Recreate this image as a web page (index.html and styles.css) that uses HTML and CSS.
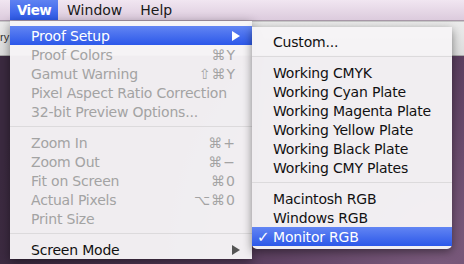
FILE: index.html
```html
<!DOCTYPE html>
<html lang="en">
<head>
    <meta charset="UTF-8">
    <title>View menu</title>
    <link rel="stylesheet" href="styles.css">
</head>
<body>
    <div class="menubar">
        <span class="menubar-item open">View</span>
        <span class="menubar-item">Window</span>
        <span class="menubar-item">Help</span>
    </div>

    <div class="desktop">
        <div class="window-toolbar">
            <span class="tab-label">ry</span>
        </div>

        <!-- main View menu -->
        <ul class="menu main-menu">
            <li class="item selected has-sub">
                <span class="label">Proof Setup</span>
                <span class="arrow"></span>

                <!-- Proof Setup submenu -->
                <ul class="menu sub-menu">
                    <li class="item"><span class="label">Custom...</span></li>
                    <li class="sep"></li>
                    <li class="item"><span class="label">Working CMYK</span></li>
                    <li class="item"><span class="label">Working Cyan Plate</span></li>
                    <li class="item"><span class="label">Working Magenta Plate</span></li>
                    <li class="item"><span class="label">Working Yellow Plate</span></li>
                    <li class="item"><span class="label">Working Black Plate</span></li>
                    <li class="item"><span class="label">Working CMY Plates</span></li>
                    <li class="sep"></li>
                    <li class="item"><span class="label">Macintosh RGB</span></li>
                    <li class="item"><span class="label">Windows RGB</span></li>
                    <li class="item selected"><span class="check">✓</span><span class="label">Monitor RGB</span></li>
                </ul>
            </li>
            <li class="item disabled"><span class="label">Proof Colors</span><span class="key">⌘Y</span></li>
            <li class="item disabled"><span class="label">Gamut Warning</span><span class="key">⇧⌘Y</span></li>
            <li class="item disabled"><span class="label">Pixel Aspect Ratio Correction</span></li>
            <li class="item disabled"><span class="label">32-bit Preview Options...</span></li>
            <li class="sep"></li>
            <li class="item disabled"><span class="label">Zoom In</span><span class="key">⌘+</span></li>
            <li class="item disabled"><span class="label">Zoom Out</span><span class="key">⌘−</span></li>
            <li class="item disabled"><span class="label">Fit on Screen</span><span class="key">⌘0</span></li>
            <li class="item disabled"><span class="label">Actual Pixels</span><span class="key">⌥⌘0</span></li>
            <li class="item disabled"><span class="label">Print Size</span></li>
            <li class="sep"></li>
            <li class="item has-sub"><span class="label">Screen Mode</span><span class="arrow"></span></li>
        </ul>
    </div>
</body>
</html>
```

FILE: styles.css
```css
/* page */
body { margin: 0; width: 464px; height: 264px; overflow: hidden; font-family: "DejaVu Sans", "Liberation Sans", sans-serif; color: #111; }

/* menu bar */
.menubar { height: 21px; display: flex; padding-left: 10px; background: linear-gradient(#f1e6f1, #dccbdd); border-bottom: 1px solid #a898a8; box-sizing: border-box; }
.menubar-item { padding: 0 9px; font-size: 14px; line-height: 21px; color: #1a1a1a; }
.menubar-item.open { padding: 0 7px; background: linear-gradient(#5f82f2, #2d59e8); color: #fff; font-weight: bold; font-size: 13.5px; letter-spacing: -0.6px; }

/* desktop + window behind the menus */
.desktop { position: relative; height: 243px; background: radial-gradient(circle at 95% 95%, #7a5a7c, #5a3e5e 40%, #3b2a40 90%); }
.window-toolbar { height: 35px; background: linear-gradient(#ebebeb, #dcdcdc); border-top: 1px solid #c8c8c8; border-bottom: 1px solid #a9a9a9; box-sizing: border-box; }
.tab-label { display: inline-block; font-family: "Liberation Sans", sans-serif; font-size: 11px; line-height: 30px; color: #333; }

/* menus */
.menu { list-style: none; margin: 0; background: rgba(246, 244, 246, 0.97); font-size: 14px; letter-spacing: -0.2px; }
.main-menu { position: absolute; left: 10px; top: 0; width: 242px; padding: 5px 0 0; box-shadow: 0 3px 10px rgba(0,0,0,0.45); }
.sub-menu { position: absolute; left: 242px; top: 1px; width: 200px; padding: 5px 0 3px; border-radius: 0 0 5px 5px; box-shadow: 0 3px 10px rgba(0,0,0,0.45); z-index: 2; }

.item { position: relative; height: 19px; display: flex; align-items: center; padding: 0 16px 0 21px; white-space: nowrap; }
.item .label { flex-grow: 1; }
.item .key { color: #a3a3a3; letter-spacing: 1px; }
.item.disabled { color: #a3a3a3; }
.item.selected { background: linear-gradient(#6285f3, #2c58e9); color: #fff; }
.sub-menu .item { color: #111; }
.sub-menu .item.selected { color: #fff; }
.check { position: absolute; left: 5px; font-size: 15px; }

.sep { height: 12px; position: relative; }
.sep::after { content: ""; position: absolute; left: 0; right: 0; top: 5px; border-top: 1px solid #dcdadc; }

/* submenu arrows */
.arrow { width: 0; height: 0; border-left: 8px solid #555; border-top: 5px solid transparent; border-bottom: 5px solid transparent; margin-right: -4px; }
.item.selected > .arrow { border-left-color: #fff; }
```
